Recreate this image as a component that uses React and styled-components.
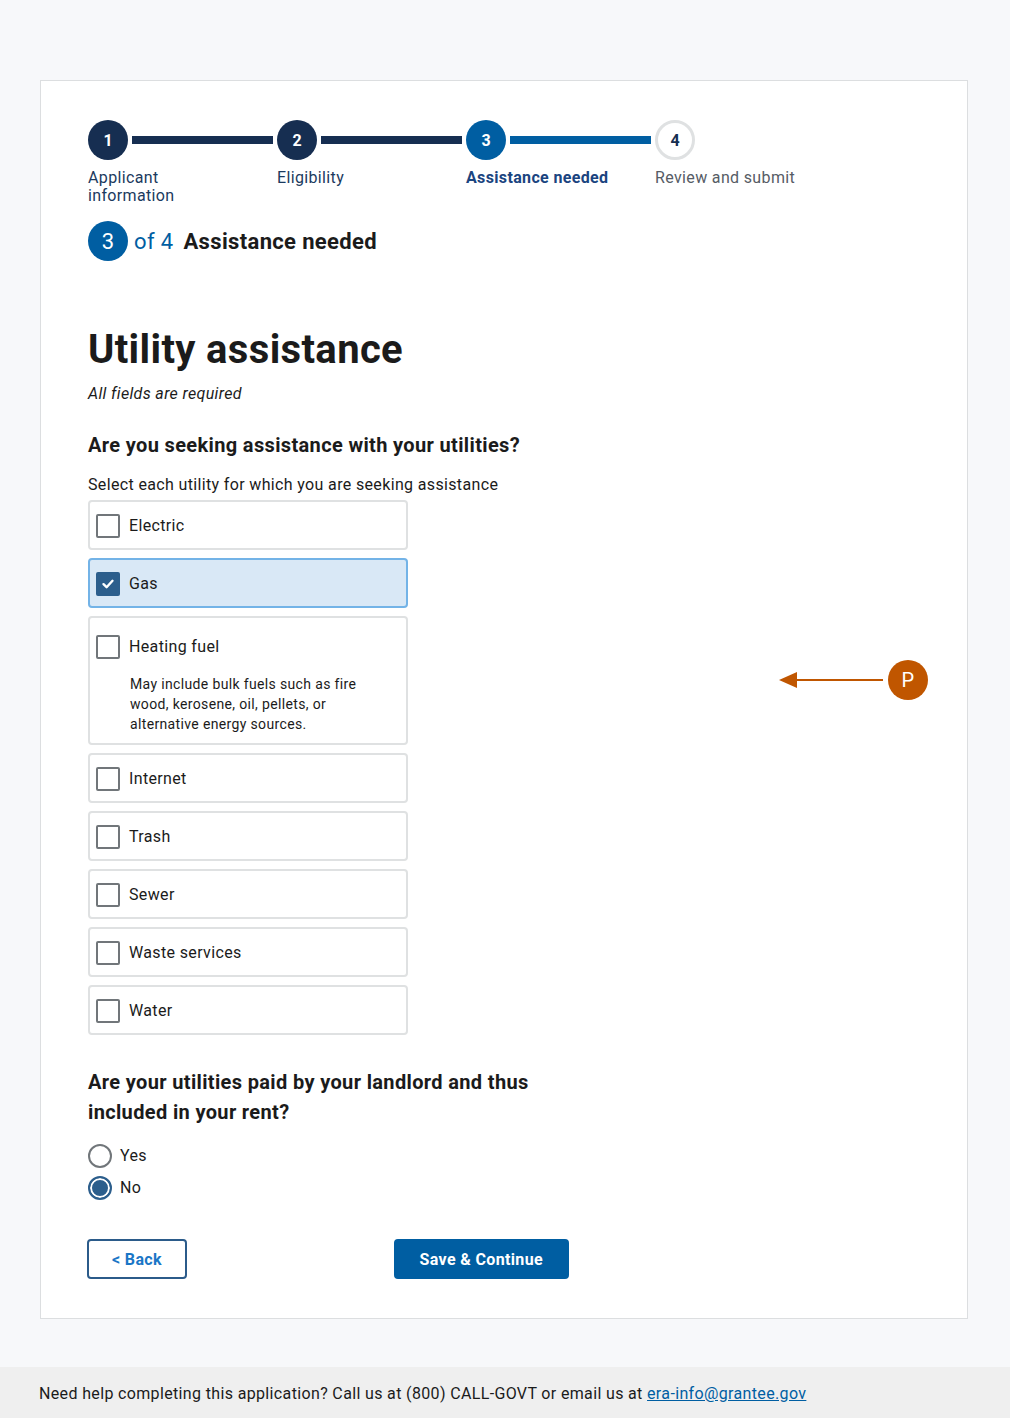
import React from 'react';
import styled, { createGlobalStyle } from 'styled-components';

const GlobalStyle = createGlobalStyle`
  body {
    margin: 0;
    background: #f7f8fa;
    font-family: Roboto, "Noto Sans", sans-serif;
    letter-spacing: 0.022em;
    color: #1b1b1b;
  }
  * { box-sizing: border-box; }
`

//Layout
const Page = styled.div`
  padding-top: 80px;
  position: relative;
`
const Card = styled.main`
  margin: 0 42px 48px 40px;
  background: #fff;
  border: 1px solid #dcdee0;
  padding: 39px 47px 39px;
`

//Stepper
const Steps = styled.ol`
  list-style: none;
  margin: 0;
  padding: 0;
  display: grid;
  grid-template-columns: repeat(4, 189px);
`
const Step = styled.li`
  display: flex;
  flex-direction: column;
`
const StepTrack = styled.div`
  display: flex;
  align-items: center;
  height: 40px;
`
const StepCircle = styled.span`
  flex: none;
  width: 40px;
  height: 40px;
  border-radius: 50%;
  display: flex;
  align-items: center;
  justify-content: center;
  font-weight: 700;
  font-size: 16px;
  letter-spacing: 0;
  color: ${p => (p.$state === 'todo' ? '#162e51' : '#fff')};
  background: ${p => (p.$state === 'done' ? '#162e51' : p.$state === 'current' ? '#005ea2' : '#fff')};
  border: ${p => (p.$state === 'todo' ? '3px solid #dfe1e2' : 'none')};
`
const StepLine = styled.span`
  flex: 1;
  height: 8px;
  margin: 0 4px;
  background: ${p => (p.$current ? '#005ea2' : '#162e51')};
`
const StepLabel = styled.span`
  margin-top: 9px;
  font-size: 16px;
  line-height: 18px;
  max-width: 110px;
  font-weight: ${p => (p.$state === 'current' ? 700 : 400)};
  color: ${p => (p.$state === 'current' ? '#1a4480' : p.$state === 'todo' ? '#565c65' : '#1b3a5e')};
  white-space: ${p => (p.$state === 'done' ? 'normal' : 'nowrap')};
`

const Counter = styled.div`
  display: flex;
  align-items: center;
  margin-top: 16px;
  font-size: 22px;
`
const CounterCircle = styled.span`
  width: 40px;
  height: 40px;
  border-radius: 50%;
  background: #005ea2;
  color: #fff;
  display: flex;
  align-items: center;
  justify-content: center;
  font-size: 22px;
`
const CounterTotal = styled.span`
  color: #005ea2;
  margin: 0 10px 0 6px;
`
const CounterTitle = styled.span`
  font-weight: 700;
`

//Form
const Title = styled.h1`
  margin: 65px 0 0;
  font-size: 40px;
  line-height: 48px;
  font-weight: 700;
`
const Required = styled.p`
  margin: 8px 0 0;
  font-style: italic;
  font-size: 16px;
  line-height: 24px;
`
const Question = styled.h2`
  margin: ${p => p.$top || '24px'} 0 0;
  font-size: 20px;
  line-height: 30px;
  font-weight: 700;
  max-width: 470px;
`
const Hint = styled.p`
  margin: 13px 0 3px;
  font-size: 16px;
  line-height: 24px;
`
const Tiles = styled.div`
  display: flex;
  flex-direction: column;
  gap: 8px;
  width: 320px;
`
const Tile = styled.label`
  display: block;
  border: 2px solid ${p => (p.$checked ? '#73b3e7' : '#dfe1e2')};
  background: ${p => (p.$checked ? '#d9e8f6' : '#fff')};
  border-radius: 4px;
  padding: ${p => (p.$desc ? '16px 6px 9px' : '11px 6px')};
`
const TileRow = styled.span`
  display: flex;
  align-items: center;
  gap: 9px;
  font-size: 16px;
  line-height: 24px;
  padding-top: 1px;
  margin-bottom: -1px;
`
const Box = styled.span`
  flex: none;
  width: 24px;
  height: 24px;
  margin-top: -1px;
  border-radius: 2px;
  border: 2px solid ${p => (p.$checked ? '#2c5e8c' : '#71767a')};
  background: ${p => (p.$checked ? '#2c5e8c' : '#fff')};
  display: flex;
  align-items: center;
  justify-content: center;
`
const TileDesc = styled.span`
  display: block;
  margin: 16px 0 0 34px;
  font-size: 14px;
  line-height: 20px;
  max-width: 240px;
`

const Radios = styled.div`
  margin-top: 17px;
  display: flex;
  flex-direction: column;
  gap: 8px;
`
const RadioRow = styled.label`
  display: flex;
  align-items: center;
  gap: 8px;
  font-size: 16px;
  line-height: 24px;
`
const RadioDot = styled.span`
  width: 24px;
  height: 24px;
  border-radius: 50%;
  border: 2px solid ${p => (p.$checked ? '#2c5e8c' : '#71767a')};
  background: ${p => (p.$checked ? '#2c5e8c' : '#fff')};
  box-shadow: ${p => (p.$checked ? 'inset 0 0 0 2px #fff' : 'none')};
`

const Actions = styled.div`
  margin-top: 39px;
  width: 481px;
  display: flex;
  justify-content: space-between;
`
const Button = styled.button`
  height: 40px;
  border-radius: 4px;
  font-family: inherit;
  font-size: 16px;
  font-weight: 700;
  letter-spacing: inherit;
  padding: 0 ${p => (p.$outline ? '23px' : '24px')};
  border: 2px solid ${p => (p.$outline ? '#2b5b8a' : '#005ea2')};
  background: ${p => (p.$outline ? '#fff' : '#005ea2')};
  color: ${p => (p.$outline ? '#1a76c6' : '#fff')};
  margin-left: ${p => (p.$outline ? '-1px' : '0')};
  cursor: pointer;
`

//Annotation
const Marker = styled.div`
  position: absolute;
  left: 779px;
  top: 660px;
  display: flex;
  align-items: center;
`
const MarkerBadge = styled.span`
  width: 40px;
  height: 40px;
  border-radius: 50%;
  background: #c05600;
  color: #fff;
  font-size: 20px;
  display: flex;
  align-items: center;
  justify-content: center;
  margin-left: 5px;
`

const Footer = styled.footer`
  background: #efefef;
  padding: 15px 39px 13px;
  font-size: 16px;
  line-height: 24px;
  a { color: #005ea2; }
`

const steps = [
  { n: 1, label: 'Applicant information', state: 'done' },
  { n: 2, label: 'Eligibility', state: 'done' },
  { n: 3, label: 'Assistance needed', state: 'current' },
  { n: 4, label: 'Review and submit', state: 'todo' },
];

const utilities = [
  { name: 'Electric' },
  { name: 'Gas', checked: true },
  { name: 'Heating fuel', desc: 'May include bulk fuels such as fire wood, kerosene, oil, pellets, or alternative energy sources.' },
  { name: 'Internet' },
  { name: 'Trash' },
  { name: 'Sewer' },
  { name: 'Waste services' },
  { name: 'Water' },
];

const Check = () => (
  <svg width="14" height="14" viewBox="0 0 14 14">
    <path d="M2.5 7.2 L5.6 10.2 L11.5 3.8" fill="none" stroke="#fff" strokeWidth="2.4" strokeLinecap="round" strokeLinejoin="round" />
  </svg>
);

const App = () => (
  <>
    <GlobalStyle />
    <Page>
      <Card>
        <Steps>
          {steps.map((s, i) => (
            <Step key={s.n}>
              <StepTrack>
                <StepCircle $state={s.state}>{s.n}</StepCircle>
                {i < steps.length - 1 && <StepLine $current={s.state === 'current'} />}
              </StepTrack>
              <StepLabel $state={s.state}>{s.label}</StepLabel>
            </Step>
          ))}
        </Steps>

        <Counter>
          <CounterCircle>3</CounterCircle>
          <CounterTotal>of 4</CounterTotal>
          <CounterTitle>Assistance needed</CounterTitle>
        </Counter>

        <Title>Utility assistance</Title>
        <Required>All fields are required</Required>

        <Question>Are you seeking assistance with your utilities?</Question>
        <Hint>Select each utility for which you are seeking assistance</Hint>
        <Tiles>
          {utilities.map(u => (
            <Tile key={u.name} $checked={u.checked} $desc={!!u.desc}>
              <TileRow>
                <Box $checked={u.checked}>{u.checked && <Check />}</Box>
                {u.name}
              </TileRow>
              {u.desc && <TileDesc>{u.desc}</TileDesc>}
            </Tile>
          ))}
        </Tiles>

        <Question $top="32px">Are your utilities paid by your landlord and thus included in your rent?</Question>
        <Radios>
          <RadioRow><RadioDot />Yes</RadioRow>
          <RadioRow><RadioDot $checked />No</RadioRow>
        </Radios>

        <Actions>
          <Button $outline>&lt; Back</Button>
          <Button>Save &amp; Continue</Button>
        </Actions>
      </Card>

      <Marker>
        <svg width="104" height="20" viewBox="0 0 104 20">
          <path d="M0 10 L18 2 L18 18 Z" fill="#c05600" />
          <line x1="14" y1="10" x2="104" y2="10" stroke="#c05600" strokeWidth="2" />
        </svg>
        <MarkerBadge>P</MarkerBadge>
      </Marker>

      <Footer>
        Need help completing this application? Call us at (800) CALL-GOVT or email us at <a href="#help">era-info@grantee.gov</a>
      </Footer>
    </Page>
  </>
);

export default App;
